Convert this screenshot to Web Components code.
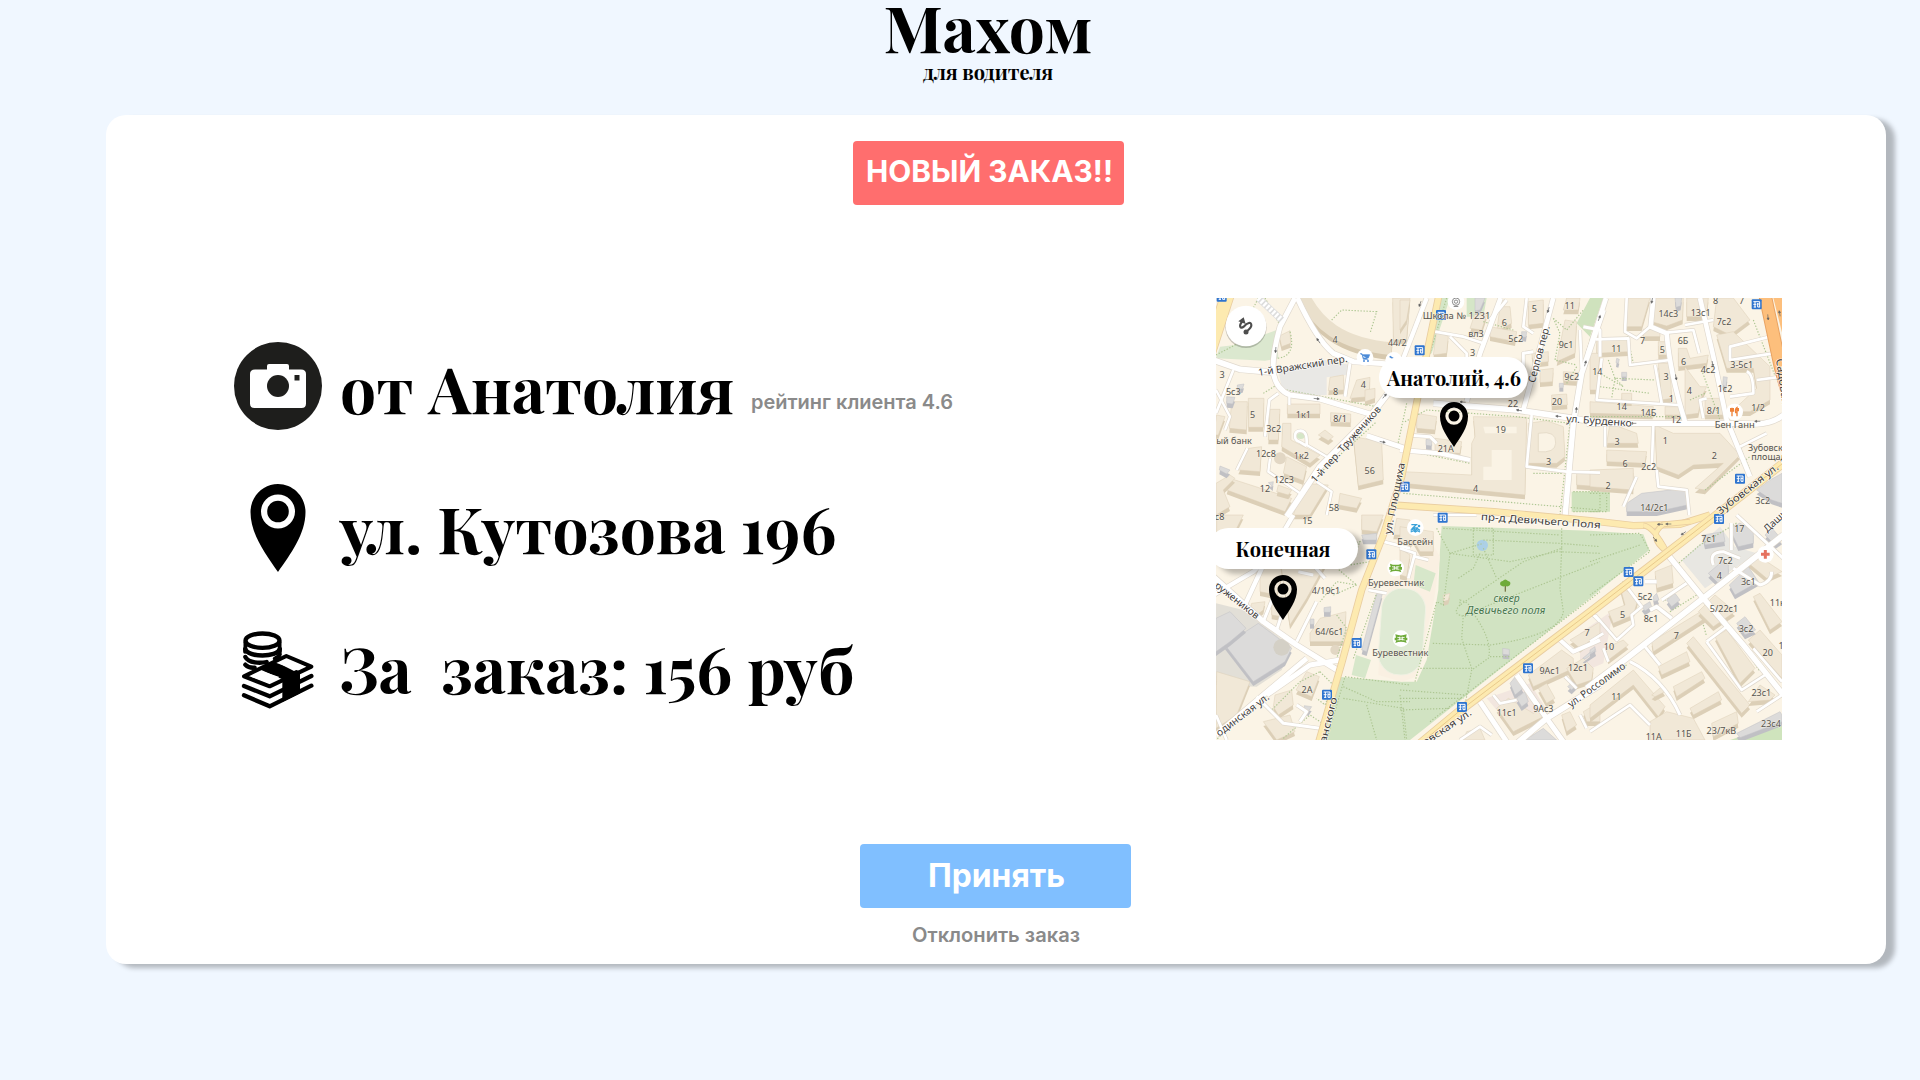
<!DOCTYPE html>
<html lang="ru">
<head>
<meta charset="utf-8">
<title>Махом для водителя</title>
<style>
html,body{margin:0;height:100%;background:#f0f7ff;overflow:hidden}
</style>
</head>
<body>
<driver-app></driver-app>
<script>
const SERIF = "'Playfair Display','Liberation Serif',serif";

/* One line of display type in a box of fixed width; `mid` centres it. */
class DisplayText extends HTMLElement {
  connectedCallback() {
    const t = this.textContent, w = +this.getAttribute('w'), s = +this.getAttribute('s');
    const mid = this.hasAttribute('mid');
    this.attachShadow({mode: 'open'}).innerHTML = `<style>:host{display:block;width:${w}px;height:${s * 1.35}px}svg{display:block;overflow:visible}
      text{font-family:${SERIF};font-weight:700;fill:#000;white-space:pre}</style>
      <svg width="${w}" height="${s * 1.35}"><text x="${mid ? w / 2 : 0}" y="${s}" font-size="${s}" ${mid ? 'text-anchor="middle"' : ''}>${t}</text></svg>`;
  }
}
customElements.define('display-text', DisplayText);

class SansText extends HTMLElement {
  connectedCallback() {
    const t = this.textContent, w = +this.getAttribute('w'), s = +this.getAttribute('s');
    this.attachShadow({mode: 'open'}).innerHTML = `<style>:host{display:block;width:${w}px;height:${s}px}svg{display:block;overflow:visible}
      text{font-family:Inter,sans-serif;font-weight:${this.getAttribute('b') || 600};fill:currentColor}</style>
      <svg width="${w}" height="${s}"><text x="0" y="${s}" font-size="${s}" textLength="${w}" lengthAdjust="spacingAndGlyphs">${t}</text></svg>`;
  }
}
customElements.define('sans-text', SansText);

const PIN = '<path fill-rule="evenodd" d="M27.500 0C42.500 0 55 12.500 55 28C55 50 40 70 27.500 88C15 70 0 50 0 28C0 12.500 12.500 0 27.500 0ZM27.500 10.500A17 17 0 1 0 27.500 44.500A17 17 0 1 0 27.500 10.500ZM27.500 16.700A10.800 10.800 0 1 1 27.500 38.300A10.800 10.800 0 1 1 27.500 16.700Z"/>';
const ICONS = {
  camera: `<svg viewBox="0 0 88 88"><circle cx="44" cy="44" r="44" fill="#1e1e1c"/><path fill="#fff" d="M21 27.500H33V24Q33 22 35 22H53Q55 22 55 24V27.500H67Q72 27.500 72 32V61.500Q72 66 67.500 66H20.500Q16 66 16 61.500V32Q16 27.500 21 27.500Z"/><circle cx="44" cy="44" r="11" fill="#1e1e1c"/><path d="M60.500 33h5v5.500h-5z" fill="#1e1e1c"/></svg>`,
  pin: `<svg viewBox="-16.500 0 88 88">${PIN}</svg>`,
  money: `<svg viewBox="43 918 264 264"><g fill="none" stroke="#000" stroke-width="11" stroke-linecap="round" stroke-linejoin="round">
    <ellipse cx="128.500" cy="962" rx="51" ry="21.500" stroke-width="13"/><path d="M77 987C84 1013 173 1013 180 987" stroke-width="14"/><path d="M77 1011C87 1030 122 1030 141 1026M166 1016Q178 1011 180 1003M77 1034Q88 1045 105 1043" stroke-width="13"/>
    <path d="M77 967V985M180 967V985M76 988V996M181 988V996"/>
    <path d="M73 1069L200 1008L275 1040L150 1099Z" stroke-width="12"/><path d="M73 1098L150 1129L275 1068M73 1126L150 1159L275 1097" stroke-width="13"/></g>
    <path d="M118 1047L162 1026L241 1054V1120L188 1146V1078Z"/><path fill="#fff" d="M94 1070L128 1054L179 1071L149 1090ZM177 1030L202 1019L253 1039L223 1053Z"/></svg>`
};
customElements.define('order-icon', class extends HTMLElement {
  connectedCallback() {
    this.attachShadow({mode: 'open'}).innerHTML = `<style>:host{display:block;width:88px;height:88px;flex:none}svg{display:block;width:88px;height:88px}</style>${ICONS[this.getAttribute('name')]}`;
  }
});

customElements.define('order-row', class extends HTMLElement {
  connectedCallback() {
    this.attachShadow({mode: 'open'}).innerHTML = `<style>:host{display:flex;height:88px;align-items:flex-start}
      .t{display:flex;align-items:flex-start;gap:18px;margin-left:18px;padding-top:var(--drop,8px)}::slotted(sans-text){margin-top:39px;color:#8a8a8a}</style>
      <order-icon name="${this.getAttribute('icon')}"></order-icon><div class="t"><slot></slot></div>`;
  }
});

customElements.define('status-badge', class extends HTMLElement {
  connectedCallback() {
    this.attachShadow({mode: 'open'}).innerHTML = `<style>:host{display:flex;justify-content:center;box-sizing:border-box;width:271px;height:64px;border-radius:4px;background:#ff6e6e;color:#fff;padding:11px 0 0 2px}</style><slot></slot>`;
  }
});
customElements.define('accept-button', class extends HTMLElement {
  connectedCallback() {
    this.attachShadow({mode: 'open'}).innerHTML = `<style>:host{display:block}button{all:unset;display:flex;justify-content:center;box-sizing:border-box;width:271px;height:64px;border-radius:4px;background:#80bfff;color:#fff;padding:10px 0 0 1px}</style><button><slot></slot></button>`;
  }
});

/* Map geometry uses a grid of 3 units per pixel, split into six sheets. */
const SHEETS = {A: [0, 0], B: [570, 0], C: [1140, 0], D: [0, 675], E: [570, 675], F: [1140, 675]};
const BUILDINGS = {
A: ['208,138 240,122 242,160 215,170','360,262 400,255 402,300 355,302','440,270 480,262 478,320 420,325','465,300 495,295 495,325 465,335','232,342 330,342 330,372 232,372','362,368 422,372 422,398 362,396','65,335 112,335 110,420 58,415','115,325 162,325 160,412 115,412','180,358 210,358 205,450 175,450','218,400 243,400 243,450 330,495 300,520 215,470','325,435 345,420 370,440 355,452','430,440 515,455 520,570 445,588','115,475 155,470 150,545 85,540','230,500 290,530 280,572 220,550','60,565 245,625 225,665 50,600','280,580 355,585 300,675 250,675','390,610 455,625 440,655 385,645','20,375 45,380 25,435 10,435','205,585 245,600 235,615 200,605','18,580 60,555 75,565 40,600 60,650 18,675','548,24 600,24 590,150 550,150'],
B: ['300,50 330,50 335,100 290,125','385,35 430,30 430,100 385,105','495,90 530,95 525,190 470,215','500,24 540,24 535,60 490,60','270,110 350,125 345,155 270,140','110,120 145,140 140,190 100,195','395,190 445,185 445,215 400,220','420,240 460,235 458,275 420,278','490,245 540,248 538,275 490,272','455,315 500,312 502,345 455,348','220,380 380,382 375,615 10,580 10,545 215,555 215,460 225,440','50,370 110,380 105,420 50,415','105,445 185,455 180,490 105,485','385,400 440,392 490,410 495,500 470,520 385,520','530,545 600,545 600,590 530,585','0,30 30,30 20,90 0,120','225,70 260,75 245,120 210,115'],
C: ['190,24 280,24 278,90 230,108 185,95','110,24 180,24 155,110 105,110','290,24 355,24 350,80 290,80','380,24 430,24 480,90 420,135 370,110','265,175 290,175 300,205 355,195 350,220 265,230','160,118 210,118 210,140 160,140','205,155 235,155 235,195 205,195','20,150 115,145 115,185 20,190','205,220 240,220 245,325 215,330','285,230 330,290 350,290 335,320 325,370 285,375','0,190 30,190 20,300 0,300','380,135 430,125 540,230 540,330 480,365 425,365 500,295 490,235 410,235','0,335 190,350 188,375 0,370','225,350 280,350 278,375 225,375','345,325 400,325 400,375 345,375','195,405 250,430 390,430 450,495 345,600 315,595 400,520 310,525 265,555 200,530','60,400 140,430 145,460 50,460','50,480 170,485 165,520 50,515','0,540 130,535 130,600 0,590','95,310 125,310 125,335 95,335'],
D: ['150,140 220,165 200,240 150,230','205,100 350,140 290,250 240,330','185,240 220,245 215,305 185,300','125,265 165,260 160,285 140,300 120,285','290,470 328,485 305,545 258,525','195,540 245,525 250,570 205,600 190,575','300,355 330,310 408,290 405,380 300,380','20,470 120,500 80,600 18,640','160,620 240,600 255,650 200,675','20,0 100,0 80,40 20,60','455,0 520,0 500,50 455,45','560,10 600,15 600,60 550,60'],
E: ['0,35 100,50 100,110 60,110 40,75 20,100 0,90','0,100 30,120 20,185 0,180','385,480 485,405 520,430 520,460 400,515','510,375 560,345 600,320 600,355 540,400','415,520 440,505 465,550 440,565','500,460 550,430 580,460 575,495 530,510','550,590 600,560 600,620 560,620','485,600 510,590 530,630 500,650','290,580 325,550 400,595 430,575 440,600 340,650','200,650 240,640 255,675 190,675','130,240 150,235 145,255 130,260'],
F: ['195,170 245,150 250,205 200,220','90,215 145,250 130,300 70,325 55,290 105,270','45,400 100,375 115,390 55,435','185,380 340,285 345,310 190,410','205,455 290,410 300,440 215,480','250,515 335,470 345,490 260,545','300,580 385,530 395,555 310,600','290,385 310,365 480,570 455,595','375,365 410,345 495,460 450,505','0,570 130,465 225,575 205,605 130,510 0,610','325,290 375,240 435,290 370,335','470,140 500,120 576,170 530,190','490,245 510,235 576,320 540,345','475,375 510,345 576,420 576,490 540,450','510,510 555,540 540,555 475,560','365,625 440,590 445,625 370,665','180,620 230,590 310,610 345,675 180,675','185,540 215,515 225,530 195,545']
};
const GREY = {
A: ['82,285 102,282 98,295 82,300','50,320 75,322 68,342 50,340','30,528 60,540 50,552 28,540','175,578 190,575 188,590'],
B: ['225,24 255,24 240,60 225,62','365,125 380,125 378,142 365,140','478,280 490,280 490,292 478,292','78,448 95,450 95,468 78,466'],
C: ['255,24 275,24 272,48 258,52','95,247 110,247 110,260 95,260','80,205 88,208 85,220 78,218','400,260 412,262 408,290 398,285','110,640 155,610 285,595 292,645 200,665 110,665','500,600 540,570 576,550 576,640 545,630'],
D: ['45,390 145,325 245,400 225,440 130,500','18,310 60,290 108,340 60,380 18,410','342,278 362,275 362,292 342,292','300,312 312,312 312,328 300,328','455,60 500,55 500,75 460,75','500,235 517,237 470,410 455,405','283,572 305,575 295,590 283,586'],
E: ['330,505 350,480 370,520 345,540','350,550 375,530 385,560 365,575','308,400 328,403 328,420 308,418','548,430 585,400 588,410 555,432','503,515 518,500 530,510 515,525','375,675 430,640 470,675'],
F: ['338,60 400,50 405,80 345,90','418,210 475,155 505,200 435,240','525,60 545,38 576,75 555,90','440,325 465,305 497,345 465,360','230,255 255,235 270,255 245,275','440,655 570,590 576,600 576,620 450,668','355,175 395,140 415,150 415,185 385,205','418,40 450,24 490,50 490,85 445,95','155,275 180,260 185,275 165,288','0,405 15,395 15,405 0,415','190,245 200,235 207,255 192,260']
};
const ROADS = {
A: ['15 M255 24L210 110Q185 200 190 250Q200 300 240 315L330 327L480 372','15 M262 24Q320 150 370 190L430 215L600 226','17 M15 212L90 238L190 247','17 M600 225L480 380L330 530L230 680','15 M470 437L600 480','9 M420 220L405 320','8 M70 240L18 370M205 310L178 330L165 440','7 M238 320V345M112 475L80 540M290 465L350 500M180 505L175 545L270 610M320 575L365 605L350 675M18 300L60 380L45 420','8 M290 465C290 445 292 425 272 422C250 422 250 450 268 455L290 468'],
B: ['14 M302 24L240 190L200 335','14 M460 24L370 360','13 M80 24L0 230','17 M100 340L350 360L520 385L600 400','16 M610 60L545 250L520 400L495 680','8 M105 125L190 140L250 160','8 M380 24L370 110L400 130M540 120L545 235M150 140L200 190V220M395 375L380 530L500 545L600 548','13 M0 480L120 490L210 510','9 M20 435L90 440L110 460M270 90L320 30M370 240V190L400 185M600 200V120L550 110'],
C: ['14 M48 24L-5 190','16 M-10 400H410L500 402Q550 400 580 375','14 M190 24L182 110L230 130Q240 250 285 395','14 M330 24L370 200L410 390L480 560','8 M110 24L105 125L140 145L180 110M230 128L310 120L328 190','8 M18 148L115 145L120 225L240 210M35 205L20 330L265 345M195 225L215 340','8 M190 400L185 540M450 470L530 430M500 270L576 260M540 140L420 170V210L550 190M285 105L370 90M45 410V470M200 540L205 590L290 600L298 675M140 560L100 650M340 385L330 330L350 325M470 245Q490 250 490 310L420 320'],
D: ['16 M10 185L160 320L260 390L390 470','15 M18 660L290 430M390 435L300 450L170 540','13 M10 240L130 170L180 120L250 0M100 280L160 150','9 M290 130L345 190M320 260L260 380M215 300L200 345M160 320L190 245M265 170L310 180','9 M140 545L220 625L330 640M260 570L290 590L270 620','8 M520 80L600 100M475 225L530 235M18 600L50 675'],
E: ['15 M350 480L440 610L490 680','15 M240 560L320 680','17 M600 510L440 610L345 690','12 M480 375L520 410L600 375','8 M280 540L300 565L350 555M495 485L530 520M180 675L240 635L275 660M540 600L560 640M580 300L600 320M0 100L45 115L25 190M45 125L85 135','8 M100 0L230 0'],
F: ['16 M230 115L340 250L460 390L580 540','17 M580 60L340 250L110 430L-10 520','9 M120 440Q220 490 270 600M165 395L210 450','8 M15 300L80 375L130 330L125 300L155 275L110 215M350 380L410 335M350 380L455 525L525 480','11 M245 310L200 275L180 285M165 200H200','9 M215 255L290 205M370 150Q355 110 400 110L450 130M424 24V105','9 M440 0L580 130M430 160L510 210Q545 200 545 170','8 M0 650L120 570L180 630M0 380L40 355M40 400L55 440','8 M490 400L576 500M500 590L576 540']
};
const DOTS = {
A: 'M365 90L395 60L500 65L480 130M18 195L75 165L145 24M165 24L210 105M240 125Q260 200 200 205M230 300L500 350M340 540L500 395M160 310L200 285M535 675L560 580M590 340L560 480M270 610L240 675',
B: 'M460 85L500 120L550 60M460 85L480 130L465 210L530 225M250 95L340 120M15 395L80 360L350 380L510 400M480 675L510 400M500 280L530 230M520 605H600M520 665H600V610M140 24L90 190M10 610L600 660M10 480L210 520M400 550H490',
C: 'M55 210L75 265L195 270M75 265L65 325M30 290L180 310M75 265L100 290L30 250M0 380H260M0 150L45 24M335 240L390 390M420 400L480 540M110 130L130 220M345 600L480 500M560 270L490 90M0 610H60M0 665H50V615M300 330L345 310',
D: 'M375 100L370 150L440 210L380 200L330 260M440 210L370 240M385 90L450 80L420 150L480 140M330 470L370 510L345 570L320 550M150 560L290 450M180 590L270 500L330 470M430 430L500 235M350 675L405 485L600 510M400 515L500 560H600M400 550L580 580L590 675M470 570L500 675M220 670L300 600L345 630M380 300L410 340L380 430M130 570L18 675',
E: 'M110 40L150 115L250 85M150 115L130 270L110 260L45 500M220 40H280V120H220ZM250 100L290 190M150 115L330 140L470 110L600 115M250 75L480 85L600 95M485 40V100L370 140L180 270M485 100L480 220L490 290Q480 360 270 390L95 385M175 190L220 160L240 115M180 270Q150 300 200 305Q230 270 180 255ZM230 285L600 140M190 300L185 370L215 460H60M220 295Q280 380 265 430L215 465L195 570M0 525L200 540M0 550H190M0 585L150 580M0 540L15 675M270 425H330M130 40L480 60M90 620L600 230',
F: 'M0 60L150 55L180 110L0 240M0 140L150 90M260 150L330 90L440 24M260 150L300 190L220 260M240 290L320 240M100 200L0 290M150 390L260 310M340 330L350 365M490 440L510 470M0 520L110 450'
};
const LABELS = {
A: [[375,159,'4'],[562,168,'44/2'],[36,263,'3'],[70,315,'5с3'],[377,316,'8'],[460,295,'4'],[128,383,'5'],[280,384,'1к1'],[390,397,'8/1'],[191,426,'3с2'],[72,462,'ый банк'],[168,501,'12с8'],[274,506,'1к2'],[479,552,'56'],[222,579,'12с3'],[165,607,'12'],[372,664,'58']],
B: [[403,67,'5'],[509,58,'11'],[313,107,'6'],[228,141,'вл3'],[347,157,'5с2'],[218,197,'3'],[498,175,'9с1'],[515,270,'9с2'],[339,350,'22'],[471,346,'20'],[302,428,'19'],[137,485,'21А'],[446,526,'3'],[227,606,'4']],
C: [[235,80,'14с3'],[332,77,'13с1'],[377,42,'8'],[402,104,'7с2'],[455,42,'7'],[158,162,'7'],[279,162,'6Б'],[217,188,'5'],[79,186,'11'],[281,226,'6'],[354,250,'4с2'],[455,235,'3-5с1'],[22,255,'14'],[228,271,'3'],[298,312,'4'],[405,307,'1с2'],[244,335,'1'],[95,360,'14'],[175,378,'14Б'],[371,371,'8/1'],[504,364,'1/2'],[258,398,'12'],[226,462,'1'],[81,464,'3'],[373,506,'2'],[105,530,'6'],[176,540,'2с2'],[54,597,'2'],[193,664,'14/2с1'],[518,641,'3с2']],
D: [[29,15,'с8'],[292,27,'15'],[348,237,'4/19с1'],[358,361,'64/6с1'],[291,533,'2А']],
E: [[561,362,'7'],[449,478,'9Ас1'],[534,468,'12с1'],[320,602,'11с1'],[430,592,'9Ас3']],
F: [[448,51,'17'],[356,80,'7с1'],[406,147,'7с2'],[388,193,'4'],[475,209,'3с1'],[165,256,'5с2'],[402,290,'5/22с1'],[562,274,'11к'],[98,310,'5'],[183,320,'8с1'],[468,352,'3с2'],[259,372,'7'],[57,406,'10'],[533,424,'20'],[573,403,'1'],[79,554,'11'],[514,543,'23с1'],[543,636,'23с4'],[191,675,'11А'],[281,665,'11Б'],[394,657,'23/7кВ']]
};
/* Named places: x, y, text, width in map units */
const PLACES = [[638,88,'Школа № 1231',203],[1514,413,'Бен Ганн',120],[562,765,'Бассейн',107],[474,887,'Буревестник',168],[487,1098,'Буревестник',168],[1614,484,'Зубовская',0],[1624,511,'площадь',0]];
/* x, y, angle, text, width in map units */
const STREETS = [[146,258,-9,'1-й Вражский пер.',271],[316,580,-48,'1-й пер. Тружеников',297],[543,734,-79,'ул. Плющиха',218],[974,280,-75,'Серпов пер.',0],[1068,396,4,'ул. Бурденко',197],[812,690,4,'пр-д Девичьего Поля',360],[1530,675,-38,'Зубовская ул.',226],[1672,728,-43,'Дашков',0],[12,890,38,'ружеников',160],[28,1340,-37,'одинская ул.',190],[348,1360,-76,'анского',140],[1083,1253,-36,'ул. Россолимо',205],[646,1368,-34,'овская ул.',170]];

class CityMap extends HTMLElement {
  connectedCallback() {
    const each = (o, f) => Object.entries(o).map(([k, v]) => `<g transform="translate(${SHEETS[k]})">${f(v)}</g>`).join('');
    const block = (a, top, side) => a.map(p => `<polygon points="${p}" fill="${side}" transform="translate(0 13)"/><polygon points="${p}" fill="${top}" stroke="${side}" stroke-width="1.500"/>`).join('');
    const road = (a, extra, c) => a.map(r => { const i = r.indexOf(' '); return `<path d="${r.slice(i + 1)}" stroke="${c}" stroke-width="${+r.slice(0, i) + extra}"/>`; }).join('');
    const avenue = (d, w) => `<path d="${d}" stroke="#e9cda0" stroke-width="${w + 5}"/><path d="${d}" stroke="#fdeab0" stroke-width="${w}"/>`;
    const halo = (x, y, g) => `<circle cx="${x}" cy="${y}" r="25" fill="#fff"/><g transform="translate(${x} ${y})">${g}</g>`;
    const stop = (x, y) => `<g transform="translate(${x} ${y})"><rect x="-15" y="-15" width="30" height="30" rx="3" fill="#2e74cf"/><path d="M-10 -8H9M-5 -8V9M-10 0H-1M-9 8H-2M3 -4V8M3 -1H9M9 -8V9M3 8H9" fill="none" stroke="#fff" stroke-width="3"/></g>`;
    const stadium = '<path d="M-17 -13Q0 -6 17 -13L15 -3H19V5H14L17 13Q0 5 -17 13L-14 5H-19V-3H-15Z" fill="#6fab3a"/><path d="M-11 -4Q0 0 11 -4M-11 4Q0 0 11 4M-4 -6V5M4 -6V5" stroke="#fff" stroke-width="2.500" fill="none"/>';
    const arrows = [[197,180,95],[325,152,-125],[320,326,5],[524,318,-50],[518,456,10],[630,42,110],[758,336,185],[927,361,190],[1045,379,185],[1015,60,105],[1099,360,-85],[1126,220,-75],[1168,84,-70],[1326,32,100],[1398,262,80],[1508,222,80],[1270,400,180],[1642,394,180],[1674,82,85],[1709,70,-100],[1350,703,180],[1375,702,180],[1420,730,145],[1335,748,50]];
    this.attachShadow({mode: 'open'}).innerHTML = `<style>
      :host{display:block;position:relative;width:566px;height:442px;overflow:hidden;background:#fbf4e6}
      .map{display:block;width:566px;height:442px}
      .n{font:27px 'Noto Sans','Open Sans',sans-serif;fill:#55534f;text-anchor:middle;paint-order:stroke;stroke:#faf3e5aa;stroke-width:3px}
      .p{font:27px 'Noto Sans','Open Sans',sans-serif;fill:#55534f;paint-order:stroke;stroke:#faf3e5cc;stroke-width:3px}
      .s{font:30px 'Noto Sans','Open Sans',sans-serif;fill:#3f3c3a;paint-order:stroke;stroke:#fffc;stroke-width:4px}
      .park{font:italic 31px 'Noto Sans','Open Sans',sans-serif;fill:#46754c;text-anchor:middle;paint-order:stroke;stroke:#e3eedb;stroke-width:3px}
      ::slotted(*){position:absolute}
    </style>
    <svg class="map" viewBox="18 24 1698 1326">
      <path d="M75 165L200 120L205 205L165 212L18 205L30 170Z" fill="#dbe8cf"/><path d="M205 240L345 210L420 225L410 255L350 262V315L290 318L215 295Z" fill="#e9e8e5"/>
      <path d="M690 24H720L665 190L640 200ZM770 24H830L820 80L770 80Z" fill="#d5e6c7"/><path d="M1085 605H1200V665H1085ZM1140 24H1180L1140 140L1100 100Z" fill="#cfe2bd"/>
      <path d="M1415 810L1530 710L1575 770L1640 790L1485 895Z" fill="#e8e7e2"/><path d="M830 1225L960 1180L1010 1260L920 1330L860 1260ZM1110 1030L1210 960L1180 1120L1110 1150Z" fill="#f2e6df"/>
      <path d="M18 940L100 960L245 1070L215 1140L140 1190L18 1185Z" fill="#e2dfd7"/>
      <path d="M695 708L1140 722L1300 733L1318 780L1140 925L600 1350H345L385 1160L575 1175H620L650 1110L685 900L690 780Z" fill="#d1e3c2"/>
      <path d="M600 790L672 770L690 800L672 930L618 1160L575 1175L505 1155L515 930Z" fill="#faf0e2"/>
      <rect x="510" y="895" width="132" height="260" rx="62" fill="#dfead4" stroke="#f0f1e3" stroke-width="3" transform="rotate(4 576 1025)"/>
      <path d="M617 825L677 850L660 905L610 885ZM438 1095L483 1110L465 1165L425 1155Z" fill="#d7e7ca"/>
      <path d="M1560 1350L1716 1300V1350Z" fill="#cfe4bd"/>
      <path d="M275 24C320 110 390 175 545 190" fill="none" stroke="#d6c8ae" stroke-width="42"/><path d="M278 14C320 100 390 162 545 176" fill="none" stroke="#eae0cc" stroke-width="38"/>
      ${each(BUILDINGS, a => block(a, '#f1e8d7', '#dccfb7'))}
      <g transform="translate(570 0)"><path d="M415 430Q470 420 467 460Q465 490 415 485Z" fill="#faf3e5" stroke="#ded3bf" stroke-width="2"/><path d="M250 410H350V430H255ZM275 480H335V570H250V530H275ZM245 630H280V655H230Z" fill="#faf3e5"/></g>
      ${each(GREY, a => block(a, '#dcdbda', '#c0c0c4'))}
      <circle cx="210" cy="505" r="18" fill="#e2d7c4"/><circle cx="215" cy="1072" r="25" fill="#d4d0c6"/><circle cx="376" cy="1080" r="15" fill="#e2d7c4"/>
      <circle cx="817" cy="766" r="17" fill="#acd0e6"/><ellipse cx="272" cy="438" rx="12" ry="9" fill="#d5e6c7"/>
      <g fill="none" stroke="#adc692" stroke-width="3.500" stroke-dasharray="4 5">${each(DOTS, d => `<path d="${d}"/>`)}</g>
      <g fill="none" stroke-linejoin="round">${each(ROADS, a => road(a, 4, '#e0d9ce'))}${each(ROADS, a => road(a, 0, '#ffffff'))}
      <path d="M145 24L215 90" stroke="#ddd" stroke-width="20"/><path d="M145 24L215 90" stroke="#fff" stroke-width="16" stroke-dasharray="7 5"/>
      ${avenue('M-4 190L54 10', 38)}${avenue('M688 10L640 240L575 560L520 735L455 900L395 1120L325 1360', 17)}
      ${avenue('M550 645L850 665L1140 692L1270 707L1410 703L1500 675', 17)}${avenue('M1300 706Q1330 710 1370 785M1370 785Q1310 740 1360 703L1440 695', 12)}
      ${avenue('M610 1378L750 1262L1140 967L1370 790L1500 690L1716 522', 22)}
      <path d="M610 1378L750 1262L1140 967L1370 790L1500 690L1716 522" stroke="#dfba79" stroke-width="2"/>
      <path d="M1664 10L1712 235L1730 300" stroke="#e9a363" stroke-width="40"/><path d="M1664 10L1712 235L1730 300" stroke="#fdbf7c" stroke-width="34"/><path d="M1700 10L1730 130" stroke="#fdbf7c" stroke-width="26"/></g>
      <g stroke="#666" stroke-width="2" fill="#555">${arrows.map(a => `<g transform="translate(${a[0]} ${a[1]}) rotate(${a[2]})"><path d="M-9 0H3" /><path d="M2 -3L8 0L2 3Z"/></g>`).join('')}</g>
      ${each(LABELS, a => a.map(l => `<text class="n" x="${l[0]}" y="${l[1]}">${l[2]}</text>`).join(''))}
      ${stop(35,20)}${stop(693,75)}${stop(629,181)}${stop(584,590)}${stop(698,683)}${stop(484,793)}${stop(440,1059)}${stop(351,1214)}${stop(954,1135)}${stop(756,1251)}${stop(1256,846)}${stop(1285,874)}${stop(1527,687)}${stop(1590,566)}${stop(1640,43)}
      ${STREETS.map(s => `<text class="s" transform="translate(${s[0]} ${s[1]}) rotate(${s[2]})" ${s[4] ? `textLength="${s[4]}" lengthAdjust="spacingAndGlyphs"` : ''}>${s[3]}</text>`).join('')}
      <text class="s" transform="translate(1698 208) rotate(82)" style="font-size:34px">Садовая</text>
      <text class="park" x="890" y="937">сквер</text><text class="park" x="887" y="973" textLength="238" lengthAdjust="spacingAndGlyphs">Девичьего поля</text>
      <g transform="translate(886 883)"><path d="M0 22V0" stroke="#7a7a4a" stroke-width="4"/><path d="M-15 2Q-18 -8 -8 -10Q0 -19 8 -10Q18 -8 14 2Q8 9 0 5Q-8 9 -15 2Z" fill="#6fab3a"/></g>
      ${halo(465,202,'<path d="M-15 -11H-9L-5 6H10M-8 -8H14L10 2H-5Z" fill="#4b8bd8" stroke="#4b8bd8" stroke-width="2"/><circle cx="-3" cy="11" r="3" fill="#4b8bd8"/><circle cx="9" cy="11" r="3" fill="#4b8bd8"/>')}
      ${halo(551,211,'<path d="M-12 -12L0 -4" stroke="#4b8bd8" stroke-width="5"/>')}
      ${halo(738,35,'<circle r="11" fill="none" stroke="#777" stroke-width="2.500"/><circle r="5" fill="none" stroke="#777" stroke-width="2.500"/><path d="M-7 14H7" stroke="#777" stroke-width="3"/>')}
      ${halo(1574,366,'<path d="M-8 -13V13M-12 -12V-3H-4V-12M7 13V-13Q0 -8 3 2H7M11 -12V-2" fill="none" stroke="#ef8137" stroke-width="4"/>')}
      ${halo(1666,793,'<path d="M-13 0H13M0 -13V13" stroke="#e57260" stroke-width="9"/>')}
      ${halo(616,713,'<path d="M-14 8L-5 3L0 8L6 3L14 8M-14 13L-5 9L0 13L6 9L14 13M-12 -9L3 -9L-8 1L8 1" fill="none" stroke="#39a1d9" stroke-width="4"/><circle cx="11" cy="-5" r="4" fill="#39a1d9"/>')}
      ${halo(557,834,stadium)}${halo(573,1046,stadium)}
      ${PLACES.map(p => `<text class="p" x="${p[0]}" y="${p[1]}" ${p[3] ? `textLength="${p[3]}" lengthAdjust="spacingAndGlyphs"` : ''}>${p[2]}</text>`).join('')}
      <circle cx="108" cy="112" r="62" fill="#0003"/><circle cx="108" cy="108" r="61" fill="#fff"/>
      <path d="M98 94C84 108 92 118 101 110C112 98 124 94 124 106C124 114 116 119 109 125" fill="none" stroke="#4d4d4d" stroke-width="6.500"/><circle cx="108" cy="126" r="7.500" fill="#4d4d4d"/><path d="M101 82L107 102L85 94Z" fill="#4d4d4d"/>
    </svg><slot></slot>`;
  }
}
customElements.define('city-map', CityMap);

customElements.define('map-label', class extends HTMLElement {
  connectedCallback() {
    this.attachShadow({mode: 'open'}).innerHTML = `<style>:host{display:flex;justify-content:center;box-sizing:border-box;height:41px;padding-top:9px;border-radius:20.500px;background:#fff;box-shadow:8px 5px 5px #00000040}</style><slot></slot>`;
  }
});
customElements.define('map-pin', class extends HTMLElement {
  connectedCallback() {
    this.attachShadow({mode: 'open'}).innerHTML = `<style>:host{display:block;width:28px;height:45px}svg{display:block}</style><svg width="28" height="45" viewBox="0 0 55 88">${PIN}</svg>`;
  }
});

customElements.define('order-card', class extends HTMLElement {
  connectedCallback() {
    this.attachShadow({mode: 'open'}).innerHTML = `<style>
      :host{display:flex;flex-direction:column;align-items:center;box-sizing:border-box;width:1780px;height:849px;margin-left:106px;padding-top:26px;border-radius:20px;background:#fff;box-shadow:9px 4px 5px #00000042}
      status-badge{margin-right:15px}
      .body{display:flex;justify-content:space-between;align-self:stretch;margin:93px 104px 104px 128px}
      .rows{display:flex;flex-direction:column;gap:54px;padding-top:44px}
      .actions{display:flex;flex-direction:column;align-items:center;gap:14px;margin-right:1px;color:#8a8a8a}
    </style>
    <status-badge><sans-text w="247" s="30" b="700">НОВЫЙ ЗАКАЗ!!</sans-text></status-badge>
    <div class="body"><div class="rows">
      <order-row icon="camera" style="--drop:8px"><display-text w="393" s="64">от Анатолия</display-text><sans-text w="202" s="20">рейтинг клиента 4.6</sans-text></order-row>
      <order-row icon="pin" style="--drop:6px"><display-text w="495" s="64">ул. Кутозова 196</display-text></order-row>
      <order-row icon="money" style="--drop:4px"><display-text w="513" s="64">За  заказ: 156 руб</display-text></order-row>
    </div>
    <city-map>
      <map-label style="left:163px;top:59px;width:149px"><display-text mid w="134" s="20">Анатолий, 4.6</display-text></map-label>
      <map-label style="left:-8px;top:230px;width:150px"><display-text mid w="94" s="20">Конечная</display-text></map-label>
      <map-pin style="left:224px;top:104px"></map-pin><map-pin style="left:53px;top:277px"></map-pin>
    </city-map></div>
    <div class="actions"><accept-button><sans-text w="137" s="33" b="700">Принять</sans-text></accept-button><sans-text w="168" s="20">Отклонить заказ</sans-text></div>`;
  }
});

customElements.define('app-header', class extends HTMLElement {
  connectedCallback() {
    this.attachShadow({mode: 'open'}).innerHTML = `<style>:host{display:flex;flex-direction:column;align-items:center;height:115px;padding-left:56px}
      .a{margin-top:-11px;height:71px}</style><display-text class="a" mid w="206" s="64">Махом</display-text><display-text mid w="130" s="20">для водителя</display-text>`;
  }
});
customElements.define('driver-app', class extends HTMLElement {
  connectedCallback() {
    this.attachShadow({mode: 'open'}).innerHTML = `<style>:host{display:flex;flex-direction:column;width:1920px;height:1080px;background:#f0f7ff;overflow:hidden}</style><app-header></app-header><order-card></order-card>`;
  }
});
</script>
</body>
</html>
